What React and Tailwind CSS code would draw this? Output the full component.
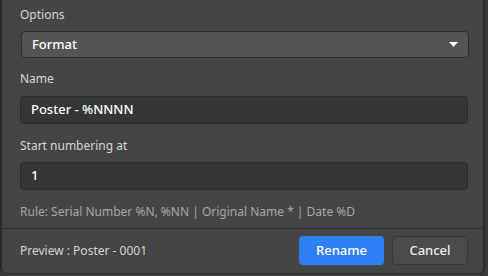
export default function App() {
  return (
    <div className="w-[488px] h-[276px] bg-[#3a3a3a] flex" style={{ fontFamily: '"Noto Sans", "Open Sans", sans-serif' }}>
      <div className="w-[485px] h-[274px] bg-[#454545] border-l-2 border-r-2 border-b border-[#2c2c2c] rounded-bl-[6px] rounded-br-[6px] flex flex-col">
        <div className="flex flex-col pl-[18px] pr-[15px] pt-[4px] flex-1">
          <div className="text-[12px] text-[#d4d4d4] h-[22px] leading-[22px]">Options</div>
          <div className="mt-[5px] ml-[1px] mr-[-1px] h-[27px] rounded-[4px] bg-[#545454] border border-[#2e2e2e] flex items-center justify-between pl-[10px] pr-[10px]">
            <span className="text-[13px] font-medium text-white">Format</span>
            <svg width="9" height="5" viewBox="0 0 9 5"><path d="M0 0 L9 0 L4.5 5 Z" fill="#ffffff" /></svg>
          </div>
          <div className="text-[12px] text-[#d4d4d4] mt-[11px] h-[20px] leading-[20px]">Name</div>
          <div className="mt-[7px] h-[28px] rounded-[4px] bg-[#363636] border border-[#2c2c2c] flex items-center pl-[10px]">
            <span className="text-[13px] font-medium text-white">Poster - %NNNN</span>
          </div>
          <div className="text-[12px] text-[#d4d4d4] mt-[12px] h-[20px] leading-[20px]">Start numbering at</div>
          <div className="mt-[6px] h-[28px] rounded-[4px] bg-[#363636] border border-[#2c2c2c] flex items-center pl-[10px]">
            <span className="text-[13px] font-medium text-white">1</span>
          </div>
          <div className="text-[12px] text-[#a6a6a6] mt-[13px] leading-[18px]">Rule: Serial Number %N, %NN | Original Name * | Date %D</div>
        </div>
        <div className="h-[45px] border-t border-[#2c2c2c] flex items-center pl-[18px] pr-[15px] pb-[1px]">
          <span className="text-[12px] text-[#d4d4d4]">Preview : Poster - 0001</span>
          <div className="ml-auto flex gap-[8px]">
            <button className="w-[85px] h-[29px] rounded-[4px] bg-[#2f80f5] text-white text-[13px] font-medium">Rename</button>
            <button className="w-[76px] h-[29px] rounded-[4px] bg-[#4b4b4b] border border-[#363636] text-[#ececec] text-[13px] font-medium">Cancel</button>
          </div>
        </div>
      </div>
    </div>
  );
}
